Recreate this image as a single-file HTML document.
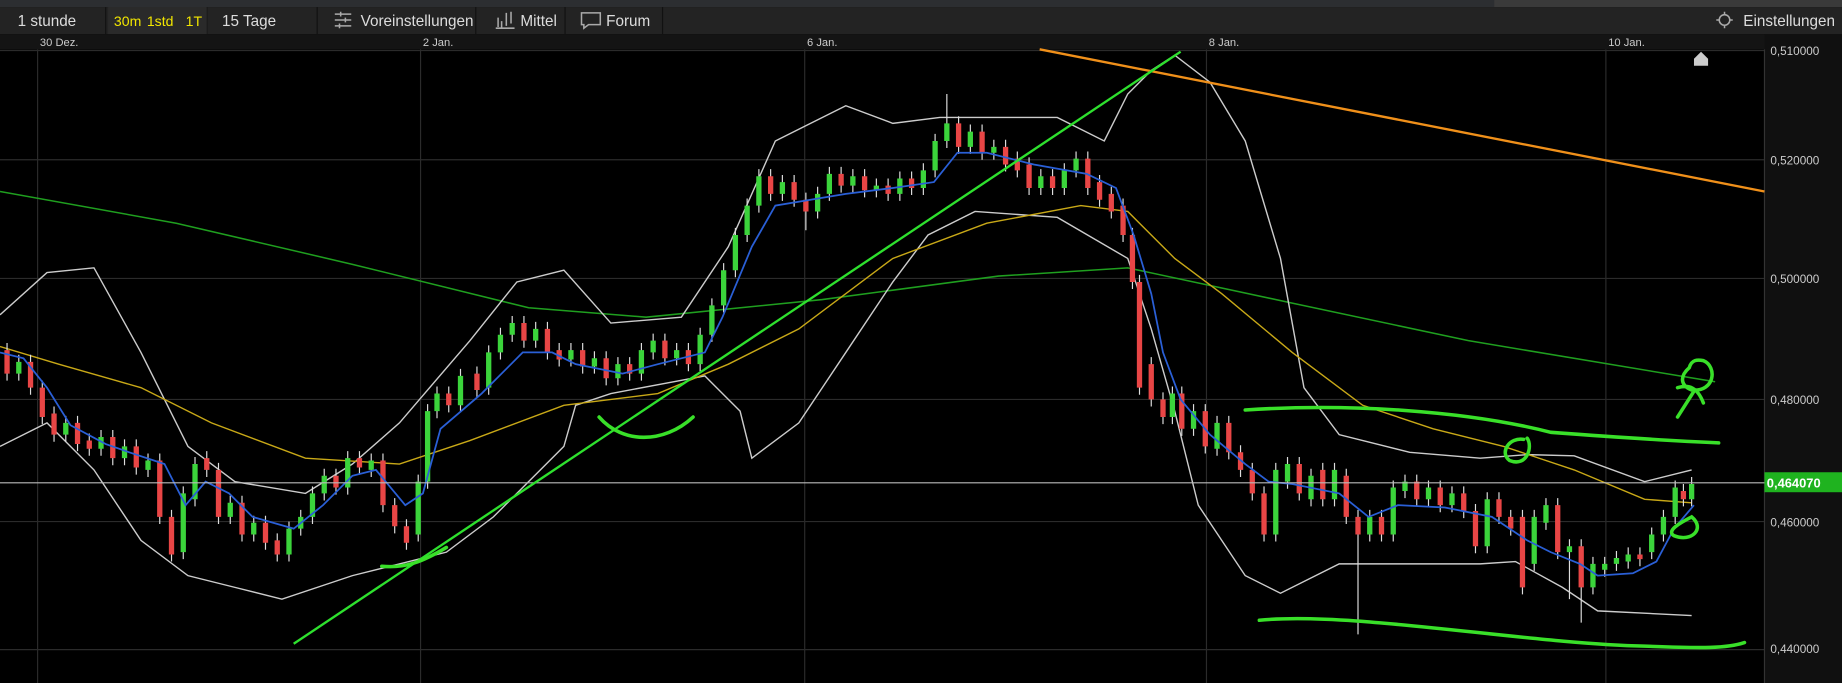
<!DOCTYPE html>
<html><head><meta charset="utf-8"><style>
html,body{margin:0;padding:0;background:#000;width:1842px;height:683px;overflow:hidden}
svg{display:block}
text{font-family:"Liberation Sans",sans-serif}
</style></head><body>
<svg width="1842" height="683" viewBox="0 0 1568 581.4" preserveAspectRatio="none" xmlns="http://www.w3.org/2000/svg">
<rect x="0" y="0" width="1568" height="582" fill="#000"/>
<rect x="0" y="0" width="1568" height="6" fill="#2c2e31"/>
<rect x="1272" y="0" width="296" height="6" fill="#3a3a3a"/>
<rect x="0" y="6" width="1568" height="23" fill="#232323"/>
<g stroke="#111" stroke-width="1">
<line x1="90" y1="6" x2="90" y2="29"/><line x1="176" y1="6" x2="176" y2="29"/><line x1="270" y1="6" x2="270" y2="29"/><line x1="405" y1="6" x2="405" y2="29"/><line x1="481" y1="6" x2="481" y2="29"/><line x1="564" y1="6" x2="564" y2="29"/>
</g>
<rect x="92" y="6" width="84" height="23" fill="#2a2a2a"/>
<g font-size="13" fill="#ddd">
<text x="15" y="22">1 stunde</text>
<text x="97" y="22" fill="#f2e600" font-size="12">30m</text>
<text x="125" y="22" fill="#f2e600" font-size="12">1std</text>
<text x="158" y="22" fill="#f2e600" font-size="12">1T</text>
<text x="189" y="22">15 Tage</text>
<text x="307" y="22">Voreinstellungen</text>
<text x="443" y="22">Mittel</text>
<text x="516" y="22">Forum</text>
<text x="1484" y="22">Einstellungen</text>
</g>
<g stroke="#aaa" stroke-width="1.3" fill="none">
<path d="M285 12h14M285 17h14M285 22h14M290 10v4M294 15v4M289 20v4"/>
<path d="M424 23v-8M427 24v-6M431 22v-11M435 20v-10M422 24h16"/>
<path d="M495 11h16v10h-10l-4 3v-3h-2z"/>
<circle cx="1468" cy="17" r="4.5"/><path d="M1461 17h2M1473 17h2M1468 10v2M1468 22v2"/>
</g>
<rect x="0" y="29" width="1568" height="13" fill="#141414"/>
<g font-size="9.5" fill="#ccc">
<text x="34" y="39">30 Dez.</text><text x="360" y="39">2 Jan.</text><text x="687" y="39">6 Jan.</text><text x="1029" y="39">8 Jan.</text><text x="1369" y="39">10 Jan.</text>
</g>
<rect x="1502" y="29" width="66" height="553" fill="#101010"/>
<g stroke="#2b2b2b" stroke-width="1">
<line x1="0" y1="43" x2="1502" y2="43"/><line x1="0" y1="136" x2="1502" y2="136"/><line x1="0" y1="237" x2="1502" y2="237"/><line x1="0" y1="340" x2="1502" y2="340"/><line x1="0" y1="444" x2="1502" y2="444"/><line x1="0" y1="553" x2="1502" y2="553"/>
<line x1="32" y1="42" x2="32" y2="582"/><line x1="358" y1="42" x2="358" y2="582"/><line x1="685" y1="42" x2="685" y2="582"/><line x1="1027" y1="42" x2="1027" y2="582"/><line x1="1367" y1="42" x2="1367" y2="582"/>
<line x1="1502" y1="42" x2="1502" y2="582" stroke="#333"/>
</g>
<g font-size="10" fill="#ccc">
<text x="1507" y="47">0,510000</text><text x="1507" y="140">0,520000</text><text x="1507" y="241">0,500000</text><text x="1507" y="344">0,480000</text><text x="1507" y="448">0,460000</text><text x="1507" y="556">0,440000</text>
</g>
<path d="M1442 50l6-6 6 6v6h-12z" fill="#ccc"/>

<g fill="none">
<polyline stroke="#1f9f1f" stroke-width="1.3" points="0,163 150,190 300,225 450,262 550,270 700,255 850,235 960,228 1100,258 1250,290 1460,325"/>
<polyline stroke="#ccc" stroke-width="1.2" points="0,268 40,232 80,228 120,300 160,380 200,410 260,420 300,395 340,360 400,290 440,240 480,230 520,275 580,270 620,210 660,120 720,90 760,105 800,100 900,100 940,120 960,80 980,60 1000,47 1030,70 1060,120 1090,220 1110,330 1140,370 1200,385 1260,390 1300,387 1340,388 1400,410 1440,400"/>
<polyline stroke="#ccc" stroke-width="1.2" points="0,380 40,360 80,400 120,460 160,490 200,500 240,510 300,490 340,480 380,470 420,440 480,380 490,345 520,335 600,320 630,350 640,390 680,360 720,300 760,240 790,200 830,180 900,185 960,220 980,280 1000,350 1020,430 1060,490 1090,505 1140,480 1200,480 1260,480 1290,478 1330,500 1360,520 1440,524"/>
<polyline stroke="#c8a817" stroke-width="1.2" points="0,295 50,310 120,330 180,360 260,390 340,395 400,375 480,345 560,335 620,310 680,280 760,220 840,190 920,175 960,180 1000,220 1040,250 1100,300 1160,345 1220,365 1280,380 1340,400 1400,425 1440,428"/>
</g>

<path stroke="#ddd" stroke-width="1" fill="none" d="M6 292V324M16 302V324M26 302V336M36 324V361M46 346V376M56 354V376M66 354V384M76 369V388M86 366V388M96 366V396M106 374V396M116 374V404M126 386V406M136 386V446M146 434V478M156 414V476M166 389V431M176 384V406M186 394V446M196 422V446M206 422V461M216 439V461M226 439V468M236 454V478M246 444V478M256 434V456M266 414V446M276 399V426M286 399V421M296 384V421M306 384V404M316 386V406M326 386V436M336 424V454M346 442V468M356 404V461M364 344V416M372 329V356M382 329V351M392 314V351M406 312V338M416 294V336M426 279V306M436 269V291M446 269V296M456 274V296M466 274V306M476 292V312M486 292V312M496 292V318M506 299V318M516 299V328M526 304V328M536 304V324M546 292V324M556 284V306M566 284V311M576 292V311M586 292V316M596 279V316M606 254V291M616 224V266M626 194V236M636 169V206M646 144V181M656 144V171M666 149V171M676 149V176M686 164V196M696 159V186M706 142V171M716 142V164M726 144V164M736 144V168M746 152V168M756 152V171M766 146V171M776 146V166M786 139V166M796 114V151M806 80V126M816 99V131M826 106V131M836 106V136M846 119V136M856 119V146M866 129V151M876 134V166M886 144V166M896 144V166M906 139V166M916 129V151M926 129V166M936 149V176M946 159V186M956 169V206M964 194V246M970 234V336M980 304V346M990 334V361M998 329V361M1006 329V371M1016 344V371M1026 344V386M1036 354V388M1046 354V391M1056 379V406M1066 394V426M1076 414V461M1086 394V461M1096 389V416M1106 389V426M1116 399V431M1126 394V431M1136 394V431M1146 399V446M1156 434V540M1166 434V461M1176 434V461M1186 409V461M1196 404V424M1206 404V431M1216 409V431M1226 409V436M1236 414V436M1246 414V441M1256 429V471M1266 419V471M1276 419V446M1286 434V456M1296 434V506M1306 434V486M1316 424V451M1326 424V476M1336 459V510M1346 459V530M1356 474V506M1366 474V491M1376 469V486M1386 466V484M1396 466V482M1406 449V476M1416 434V461M1426 409V446M1433 412V431M1440 406V431"/>
<path stroke="#e84545" stroke-width="4.5" fill="none" d="M6 298V318M26 308V330M36 330V355M46 352V370M66 360V378M76 375V382M96 372V390M116 380V398M136 392V440M146 440V472M176 390V400M186 400V440M206 428V455M226 445V462M236 460V472M286 405V415M306 390V398M326 392V430M336 430V448M346 448V462M382 335V345M406 318V332M446 275V290M466 280V300M476 298V306M496 298V312M516 305V322M536 310V318M566 290V305M586 298V310M656 150V165M676 155V170M686 170V180M716 148V158M736 150V162M756 158V165M776 152V160M816 105V125M836 112V130M856 125V140M866 135V145M876 140V160M896 150V160M926 135V160M936 155V170M946 165V180M956 175V200M964 200V240M970 240V330M980 310V340M990 340V355M1006 335V365M1026 350V380M1046 360V385M1056 385V400M1066 400V420M1076 420V455M1106 395V420M1126 400V425M1146 405V440M1156 440V455M1176 440V455M1206 410V425M1226 415V430M1246 420V435M1256 435V465M1276 425V440M1286 440V450M1296 440V500M1326 430V470M1346 465V500M1396 472V476M1433 418V425"/>
<path stroke="#3bd43b" stroke-width="4.5" fill="none" d="M16 318V308M56 370V360M86 382V372M106 390V380M126 400V392M156 470V420M166 425V395M196 440V428M216 455V445M246 472V450M256 450V440M266 440V420M276 420V405M296 415V390M316 400V392M356 455V410M364 410V350M372 350V335M392 345V320M416 330V300M426 300V285M436 285V275M456 290V280M486 306V298M506 312V305M526 322V310M546 318V298M556 300V290M576 305V298M596 310V285M606 285V260M616 260V230M626 230V200M636 200V175M646 175V150M666 165V155M696 180V165M706 165V148M726 158V150M746 162V158M766 165V152M786 160V145M796 145V120M806 120V105M826 125V112M846 130V125M886 160V150M906 160V145M916 145V135M998 355V335M1016 365V350M1036 382V360M1086 455V400M1096 410V395M1116 425V405M1136 425V400M1166 455V440M1186 455V415M1196 418V410M1216 425V415M1236 430V420M1266 465V425M1306 480V440M1316 445V430M1336 470V465M1356 500V480M1366 485V480M1376 480V475M1386 478V472M1406 470V455M1416 455V440M1426 440V415M1440 425V412"/>
<polyline fill="none" stroke="#2a5fd6" stroke-width="1.5" points="0,300 20,305 40,330 60,362 90,378 110,385 140,395 158,430 175,410 195,420 215,440 250,450 275,430 300,405 320,400 345,430 360,420 375,365 410,335 445,300 470,300 490,310 530,318 560,310 600,300 615,270 640,210 660,175 690,170 720,165 760,160 795,155 815,130 840,130 880,140 925,148 950,160 965,200 980,250 990,300 1005,340 1030,370 1060,395 1080,410 1100,412 1140,420 1165,440 1190,430 1230,432 1270,440 1300,460 1320,470 1345,480 1360,490 1390,488 1410,478 1425,450 1442,430"/>

<line x1="0" y1="411" x2="1502" y2="411" stroke="#bbb" stroke-width="1"/>
<rect x="1502" y="402" width="66" height="17" fill="#1fb31f"/>
<text x="1504" y="415" font-size="11" font-weight="bold" fill="#fff">0,464070</text>
<line x1="885" y1="42" x2="1502" y2="163" stroke="#f0901a" stroke-width="2"/>
<line x1="250" y1="548" x2="1005" y2="44" stroke="#2ee02e" stroke-width="2"/>
<g stroke="#39e029" stroke-width="3" fill="none" stroke-linecap="round">
<path d="M1072 528C1150 520 1300 548 1400 550C1450 552 1470 552 1485 547"/>
<path d="M1060 349C1150 343 1250 350 1320 368C1400 374 1440 376 1463 377"/>
<path d="M325 482C345 484 360 478 380 466"/>
<path d="M510 355C530 378 565 378 590 355"/>
<path d="M1297 374C1285 372 1276 385 1285 392C1300 398 1305 380 1300 373"/>
<path d="M1440 440C1430 445 1418 452 1425 456C1440 462 1452 450 1440 440z"/>
<path d="M1438 313C1430 320 1430 328 1440 332C1460 334 1462 312 1450 307C1445 306 1440 306 1438 313M1428 330C1438 327 1445 330 1450 343M1442 333L1428 355"/>
</g>
</svg>
</body></html>
